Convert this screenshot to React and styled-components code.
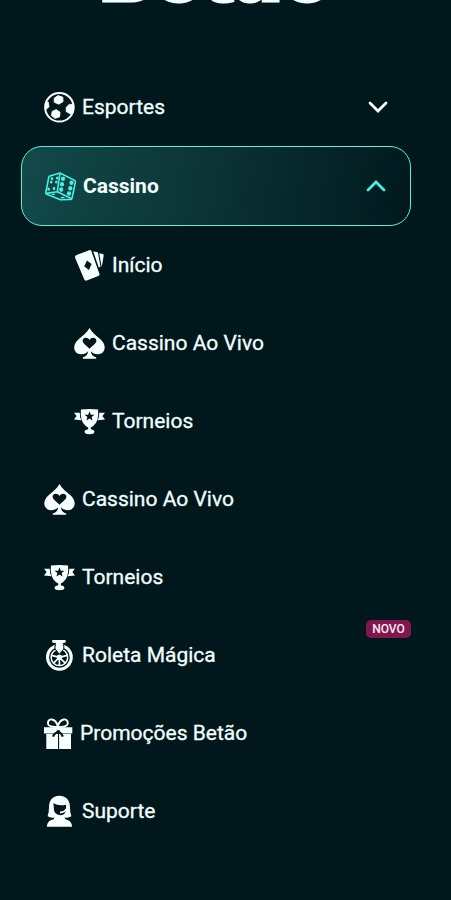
import React from "react";
import styled, { createGlobalStyle } from "styled-components";

const GlobalStyle = createGlobalStyle`
  * { box-sizing: border-box; }
  body { margin: 0; background: #00171b; }
`;

const Sidebar = styled.div`
  width: 451px;
  height: 900px;
  overflow: hidden;
  background: #00171b;
  color: #f2fffe;
  font-family: Roboto, sans-serif;
`;

const LogoBar = styled.header`
  height: 68px;
  overflow: hidden;
  padding-left: 100px;
`;

const Logo = styled.div`
  margin-top: -78px;
  height: 100px;
  line-height: 100px;
  font-family: Inter, sans-serif;
  font-size: 80px;
  font-weight: 900;
  -webkit-text-stroke: 3px currentColor;
  white-space: nowrap;
`;

const Menu = styled.nav`
  display: flex;
  flex-direction: column;
  width: 390px;
  margin-left: 21px;
`;

const Item = styled.a`
  display: flex;
  align-items: center;
  height: ${(p) => (p.$active ? 80 : 78)}px;
  padding: 0 23px 0 ${(p) => (p.$nested ? 52 : 22)}px;
  border: ${(p) => (p.$active ? "1px solid #5eece0" : "0")};
  border-radius: 21px;
  background: ${(p) => (p.$active ? "linear-gradient(100deg, #124a49 0%, #0c3436 46%, #00191d 100%)" : "none")};
`;

const Label = styled.span`
  margin-left: ${(p) => p.$gap ?? 7}px;
  flex: 1;
  font-size: 21px;
  line-height: 28px;
  font-weight: ${(p) => (p.$active ? 700 : 400)};
  -webkit-text-stroke: ${(p) => (p.$active ? "0" : "0.3px currentColor")};
  white-space: nowrap;
`;

const Icon = styled.svg`
  flex: none;
  width: 32px;
  height: 32px;
  overflow: visible;
  color: ${(p) => (p.$active ? "#48f0df" : "#f8ffff")};
`;

const Chevron = styled.svg`
  flex: none;
  width: 22px;
  height: 14px;
  margin-right: ${(p) => (p.$active ? 0 : -0.5)}px;
  color: ${(p) => (p.$active ? "#48f0df" : "#f8ffff")};
`;

const ItemSlot = styled.div`
  position: relative;
`;

const Badge = styled.span`
  position: absolute;
  top: 4px;
  right: 0;
  width: 45px;
  height: 18px;
  border-radius: 5px;
  background: #80184f;
  color: #ffe9f6;
  font-size: 12px;
  line-height: 18px;
  font-weight: 500;
  text-align: center;
`;

const DARK = "#00171b";

const star = "M0-5 1.3-1.6 5-1.5 2.1.8 3.1 4.3 0 2.3-3.1 4.3-2.1.8-5-1.5-1.3-1.6Z";

const drawings = {
  ball: (
    <>
      <circle cx="16.4" cy="16.3" r="14.3" fill="none" stroke="currentColor" strokeWidth="2" />
      <path
        fill="currentColor"
        stroke="currentColor"
        strokeWidth=".9"
        strokeLinejoin="round"
        d="M11.2 7.2 15 4.6 19.8 6.2 20 10.6 15.8 13.2 11.3 11.2ZM9.2 20.4 13.2 18.6 17 21.2 16.6 25.8 12 27.3 8.5 24.6ZM26.2 13.4 30.5 13.4 30.2 19.2 27.6 23 23.2 20.5 23.3 16.2ZM2.6 11.4 5.2 11 6 15.8 2.6 18.8Z"
      />
    </>
  ),
  dice: (
    <>
      <g fill="none" stroke="currentColor" strokeWidth="1.6" strokeLinejoin="round">
        <path d="M5.8 6 16 3 31 10.6Q31.6 11 31.4 12L28 28.3Q27.8 29.3 26.8 29.4L16.5 29.8 2.8 24.2Q1.6 23.7 1.8 22.6L4.8 7Q5 6.2 5.8 6Z" />
        <path d="M16 3 13.3 21.7 27.8 28.8M13.3 21.7 2 23.4" />
      </g>
      <g fill="currentColor">
        {[[19, 8.8], [18, 14.2], [17.2, 19.6], [27.5, 12.7], [26.3, 18.2], [25, 23.5]].map(([x, y]) => (
          <ellipse key={`${x}-${y}`} cx={x} cy={y} rx="2.1" ry="2.3" />
        ))}
        {[[8, 8.6], [13.2, 8], [7.2, 12], [12.3, 12], [4.7, 19.2], [10, 18.4]].map(([x, y]) => (
          <ellipse key={`${x}-${y}`} cx={x} cy={y} rx="1.3" ry="1.6" />
        ))}
        <ellipse cx="9.3" cy="24.2" rx="2" ry=".8" />
        <ellipse cx="18.6" cy="27.6" rx="2.2" ry=".8" />
      </g>
    </>
  ),
  cards: (
    <>
      <path
        fill="currentColor"
        d="M3.6 6 16.2 1.2Q17.8.7 18.4 2.3L26.3 24.6Q26.9 26.3 25.3 27L13.7 31.5Q12 32.1 11.3 30.5L2.2 9Q1.4 6.9 3.6 6Z"
      />
      <path fill="currentColor" d="M20.2 2.4 24 3.1Q25 3.3 25.1 4.4L27.5 17.8 25.8 18.5ZM26.2 4.2 29.7 5Q30.8 5.3 30.7 6.5L28.7 18.2Z" />
      <path fill={DARK} d="M14 11.6 18.6 15.1 15.9 21 11.2 17.2Z" />
    </>
  ),
  spade: (
    <>
      <path
        fill="currentColor"
        d="M16.5 1C19.1 5.8 23.1 8.6 27.1 12 34.6 18.4 32.2 27 25.2 27.2 22 27.3 19.6 26.2 17.9 24.3 18.1 27.8 20 29.7 23.2 30.4V31.7H9.8V30.4C13 29.7 14.9 27.8 15.1 24.3 13.4 26.2 11 27.3 7.8 27.2.8 27-1.6 18.4 5.9 12 9.9 8.6 13.9 5.8 16.5 1Z"
      />
      <path
        fill={DARK}
        d="M16.5 21.7C14 19 9.6 16.8 9.6 13.8 9.6 10.2 14.7 9.6 16.5 13 18.3 9.6 23.4 10.2 23.4 13.8 23.4 16.8 19 19 16.5 21.7Z"
      />
    </>
  ),
  trophy: (
    <>
      <path fill="currentColor" d="M7.9 4.6Q16.5 3.2 25.1 4.6 26.3 16.8 20 21.2 18 22.6 16.5 22.6 15 22.6 13 21.2 6.7 16.8 7.9 4.6Z" />
      <ellipse cx="16.5" cy="26.7" rx="4.9" ry="2.5" fill="currentColor" />
      <path fill="currentColor" d="M15.2 22H17.8V26H15.2Z" />
      <path fill="currentColor" d="M1 7.7H6.7Q6.7 11.5 8.2 15.3L1 14.5 3.6 11.1ZM32 7.7H26.3Q26.3 11.5 24.8 15.3L32 14.5 29.4 11.1Z" />
      <path fill={DARK} transform="translate(16.5 11.3)" d={star} />
    </>
  ),
  wheel: (
    <>
      <circle cx="16.4" cy="18.3" r="11.9" fill="none" stroke="currentColor" strokeWidth="3" />
      <circle cx="16.4" cy="18.3" r="8.3" fill="none" stroke="currentColor" strokeWidth="1.5" />
      <path stroke="currentColor" strokeWidth="1.7" d="M16.4 18.3V26.5M16.4 18.3 8.6 16.4M16.4 18.3 24.2 16.4M16.4 18.3 10.6 24.1M16.4 18.3 22.2 24.1" />
      <circle cx="16.4" cy="18.3" r="2.7" fill="currentColor" />
      <path fill="currentColor" stroke={DARK} strokeWidth="1" d="M12 6.2H20.8V10L16.4 15.2 12 10Z" />
      <path fill="currentColor" d="M9.2 1H22.6V3.4L19.8 4.2V8H13V4.2L9.2 3.4Z" />
    </>
  ),
  gift: (
    <>
      <path fill="none" stroke="currentColor" strokeWidth="1.9" d="M14.8 10C11.5 9.5 5.2 10.9 4.9 6.2 4.7.8 12.7.6 14.8 9.5 17 .6 25 .8 24.8 6.2 24.5 10.9 18.2 9.5 14.8 10Z" />
      <path fill="currentColor" d="M1 10.2H29.3V16.4H1ZM3.3 17.1H15V32H3.3ZM16.1 17.1H28V32H16.1Z" />
      <path fill="none" stroke={DARK} strokeWidth="2.2" d="M14.5 15.3Q11.3 16.2 10 19.7M16 15.3Q18.6 16.2 19.8 19.7" />
      <circle cx="15.3" cy="14.9" r="2" fill={DARK} />
    </>
  ),
  support: (
    <>
      <path fill="currentColor" d="M16.4.7C23.5.7 27 5.7 27 12.3Q26.9 17.5 28.4 21.3 25.5 23.2 21.4 22.4L22.4 24.2C26.6 25.1 28.9 27.3 29.1 31.7H3.9C4.1 27.3 6.4 25.1 10.6 24.2L11.6 22.4Q7.5 23.2 4.6 21.3 6.1 17.5 6 12.3C6 5.7 9.3.7 16.4.7Z" />
      <path fill={DARK} d="M10.4 8.3Q15.8 11.2 23 9.7V15.2Q22 20.2 17.4 20.2 12.8 19.8 11.1 16Z" />
      <path fill="none" stroke="currentColor" strokeWidth="1.8" d="M23.5 13.8Q22.2 17.3 17 17.5" />
    </>
  ),
};

const items = [
  { label: "Esportes", icon: "ball", chevron: "down" },
  { label: "Cassino", icon: "dice", chevron: "up", active: true },
  { label: "Início", icon: "cards", nested: true },
  { label: "Cassino Ao Vivo", icon: "spade", nested: true },
  { label: "Torneios", icon: "trophy", nested: true },
  { label: "Cassino Ao Vivo", icon: "spade" },
  { label: "Torneios", icon: "trophy" },
  { label: "Roleta Mágica", icon: "wheel", badge: "NOVO" },
  { label: "Promoções Betão", icon: "gift", gap: 5 },
  { label: "Suporte", icon: "support" },
];

export default function App() {
  return (
    <>
      <GlobalStyle />
      <Sidebar>
        <LogoBar>
          <Logo>Betão</Logo>
        </LogoBar>
        <Menu>
          {items.map((item, i) => (
            <ItemSlot key={i}>
              <Item $active={item.active} $nested={item.nested}>
                <Icon $active={item.active} viewBox="0 0 32 32">
                  {drawings[item.icon]}
                </Icon>
                <Label $active={item.active} $gap={item.gap}>
                  {item.label}
                </Label>
                {item.chevron && (
                  <Chevron $active={item.active} viewBox="0 0 22 14">
                    <path
                      d={item.chevron === "up" ? "M3 11 11 3 19 11" : "M3 3 11 11 19 3"}
                      fill="none"
                      stroke="currentColor"
                      strokeWidth="2.8"
                      strokeLinecap="round"
                    />
                  </Chevron>
                )}
              </Item>
              {item.badge && <Badge>{item.badge}</Badge>}
            </ItemSlot>
          ))}
        </Menu>
      </Sidebar>
    </>
  );
}
